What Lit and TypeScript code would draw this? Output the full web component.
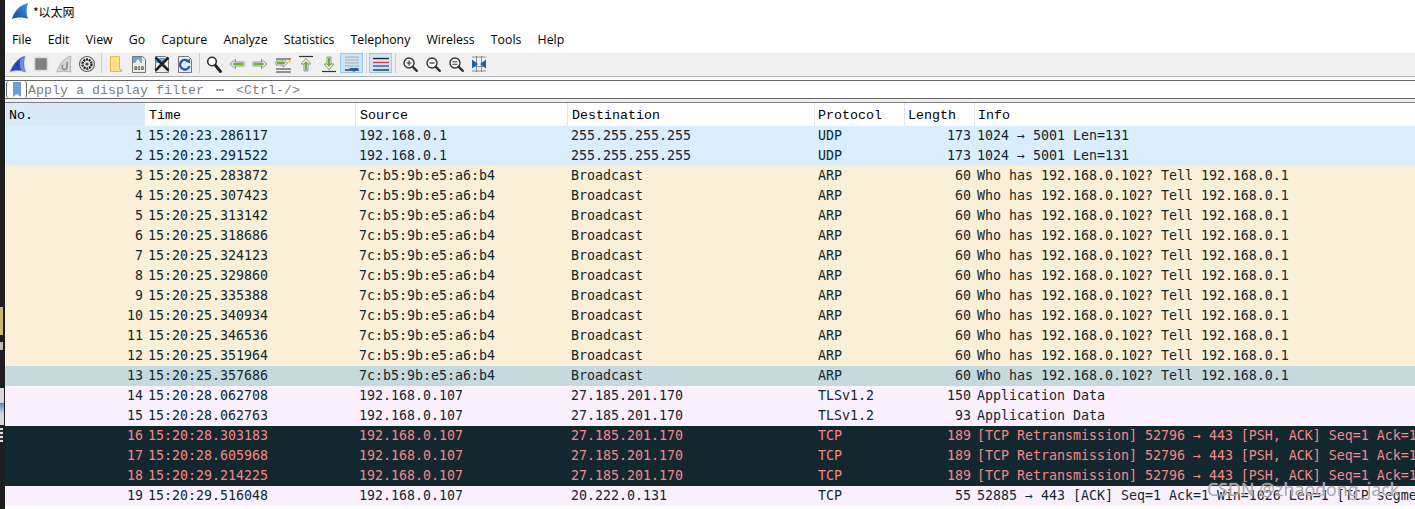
import { LitElement, html, css, svg } from "lit";
import { customElement } from "lit/decorators.js";

type Row = [string, string, string, string, string, string, string, string];
const rows: Row[] = [];
const ip1 = "192.168.0.1", ip107 = "192.168.0.107", mac = "7c:b5:9b:e5:a6:b4", dst = "27.185.201.170";
const arp = "Who has 192.168.0.102? Tell 192.168.0.1";
const retr = "[TCP Retransmission] 52796 → 443 [PSH, ACK] Seq=1 Ack=1 Win=1026 Len=135";
const add = (c: string, t: string, s: string, d: string, p: string, l: string, i: string) =>
  rows.push([String(rows.length + 1), t, s, d, p, l, i, c] as Row);
add("udp", "15:20:23.286117", ip1, "255.255.255.255", "UDP", "173", "1024 → 5001 Len=131");
add("udp", "15:20:23.291522", ip1, "255.255.255.255", "UDP", "173", "1024 → 5001 Len=131");
["283872", "307423", "313142", "318686", "324123", "329860", "335388", "340934", "346536", "351964"].forEach((t) =>
  add("arp", "15:20:25." + t, mac, "Broadcast", "ARP", "60", arp));
add("sel", "15:20:25.357686", mac, "Broadcast", "ARP", "60", arp);
add("tls", "15:20:28.062708", ip107, dst, "TLSv1.2", "150", "Application Data");
add("tls", "15:20:28.062763", ip107, dst, "TLSv1.2", "93", "Application Data");
add("bad", "15:20:28.303183", ip107, dst, "TCP", "189", retr);
add("bad", "15:20:28.605968", ip107, dst, "TCP", "189", retr);
add("bad", "15:20:29.214225", ip107, dst, "TCP", "189", retr);
add("tls", "15:20:29.516048", ip107, "20.222.0.131", "TCP", "55", "52885 → 443 [ACK] Seq=1 Ack=1 Win=1026 Len=1 [TCP segment of a reassembled PDU]");

const menus = ["File", "Edit", "View", "Go", "Capture", "Analyze", "Statistics", "Telephony", "Wireless", "Tools", "Help"];
const cols = ["No.", "Time", "Source", "Destination", "Protocol", "Length", "Info"];

const outline = "#8f8f8f";
const mag = (inner: unknown) => svg`<circle cx="8" cy="8" r="5" fill="#fff" stroke="#333" stroke-width="1.4"/><path d="M11.8 11.8l4 4" stroke="#333" stroke-width="2.4" stroke-linecap="round"/>${inner}`;
const page = (inner: unknown) => svg`<path d="M2.5 1.500h10l3 3v13h-13z" fill="#e9eef2" stroke="#777"/>${inner}`;

const icons: Record<string, unknown> = {
  fin: svg`<path d="M1 17C4 9 9 3 16 1c-1.500 5-1.500 11 .5 16-5-2-11-2-15.500 0z" fill="#2743b8" stroke="#9aa0b8" stroke-width=".8"/><path d="M11.500 4c-1 4-1 9 1.500 12l3 1c-2-5-2-11 0-15z" fill="#6f8fe0"/>`,
  stop: svg`<rect x="2.500" y="2.500" width="13" height="13" fill="#808080" stroke="#dcdcdc" stroke-width="1.400"/>`,
  restart: svg`<path d="M2 17C4 9 9 3 16 1c-1 5-1 11 0 16-5-1-10-1-14 0z" fill="#d6d6d6" stroke="#a8a8a8" stroke-width=".8"/><path d="M12 7v5a2.500 2.500 0 1 1-4-2" fill="none" stroke="#8a8a8a" stroke-width="1.600"/>`,
  options: svg`<circle cx="9" cy="9" r="7.500" fill="#eee" stroke="#666" stroke-width="1.200"/><circle cx="9" cy="9" r="4.500" fill="none" stroke="#222" stroke-width="2.400" stroke-dasharray="2 .8"/><circle cx="9" cy="9" r="1.600" fill="#444"/>`,
  open: svg`<path d="M3.500 1.500h9v13h2v2h-11z" fill="#fde08a" stroke="#e4b84e"/>`,
  save: page(svg`<path d="M3 2h9v6h-9z" fill="#6aa6d8"/><path d="M5 8l3-4 3 4z" fill="#fff"/><text x="9" y="15" text-anchor="middle" font-family="Liberation Mono, monospace" font-size="5.500" font-weight="700" fill="#333">010</text>`),
  close: page(svg`<path d="M3 3h9v5h-9z" fill="#6aa6d8"/><path d="M2.500 2.500l13 13M15.500 2.500l-13 13" stroke="#222" stroke-width="2.600"/>`),
  reload: page(svg`<path d="M12.500 6.500a4.800 4.800 0 1 0 1 4.500" fill="none" stroke="#1f5fb0" stroke-width="2.400"/><path d="M9.500 6.500l4.500-3v5z" fill="#1f5fb0"/>`),
  find: svg`<circle cx="7" cy="6.500" r="4.300" fill="#fff" stroke="#333" stroke-width="1.600"/><path d="M10.500 10.500l5 6" stroke="#222" stroke-width="2.800" stroke-linecap="round"/>`,
  back: svg`<path d="M2 9l5.500-4.500V7h8.500v4H7.500v2.500z" fill="#f4f4f4" stroke=${outline}/><path d="M4.500 9l3-2.300V8h7.500v2H7.500v1.300z" fill="#6cb31c"/>`,
  fwd: svg`<path d="M16 9l-5.500-4.500V7H2v4h8.500v2.500z" fill="#f4f4f4" stroke=${outline}/><path d="M13.500 9l-3-2.300V8H3v2h7.500v1.300z" fill="#6cb31c"/>`,
  go: svg`<path d="M2 4h15M2 14h15M2 17h15" stroke="#333" stroke-width="1.200"/><path d="M13.500 8L9 3.800V6H2v4h7v2.200z" fill="#f4f4f4" stroke=${outline}/><path d="M11.500 8L9.300 6V7H3v2h6.300v1z" fill="#6cb31c"/><circle cx="15.500" cy="6.500" r="1.500" fill="#f4d23c"/>`,
  top: svg`<path d="M2 1.500h14" stroke="#333" stroke-width="1.200"/><path d="M9 3.500l5 5.500h-3v7H7V9H4z" fill="#f4f4f4" stroke=${outline}/><path d="M9 6l2.500 3H10v6H8V9H6.500z" fill="#6cb31c"/>`,
  bottom: svg`<path d="M2 16.500h14" stroke="#333" stroke-width="1.200"/><path d="M9 14.500L4 9h3V2h4v7h3z" fill="#f4f4f4" stroke=${outline}/><path d="M9 12L6.500 9H8V3h2v6h1.500z" fill="#6cb31c"/>`,
  auto: svg`<path d="M2 2h14M2 5h14M2 8h14M2 11h14" stroke="#a9a9a9"/><path d="M2 15h14" stroke="#222" stroke-width="1.300"/><path d="M6 13h10l-5 4z" fill="#1e5fae"/>`,
  color: svg`<path d="M1 3.500h16" stroke="#222" stroke-width="1.300"/><path d="M1 7.500h16" stroke="#d8343a" stroke-width="1.300"/><path d="M1 11h16" stroke="#2a50b0" stroke-width="1.300"/><path d="M1 15h16" stroke="#222" stroke-width="1.300"/>`,
  zin: mag(svg`<path d="M5.500 8h5M8 5.500v5" stroke="#333" stroke-width="1.200"/>`),
  zout: mag(svg`<path d="M5.500 8h5" stroke="#333" stroke-width="1.200"/>`),
  z1: mag(svg`<path d="M5.500 6.800h5M5.500 9.200h5" stroke="#333" stroke-width="1.100"/>`),
  resize: svg`<path d="M2 2h14M2 16h14M2 11.500h14M6.500 1v16M11.500 1v16" stroke="#777" stroke-width=".8" fill="none"/><path d="M2 4.500l6 4.500-6 4.500zM16 4.500L10 9l6 4.500z" fill="#1e5fae"/>`,
};

const tools: string[] = ["fin", "stop", "restart", "options", "|", "open", "save", "close", "reload", "|", "find", "back", "fwd", "go", "top", "bottom", "*auto", "|", "*color", "|", "zin", "zout", "z1", "resize"];

@customElement("app-root")
export class AppRoot extends LitElement {
  static styles = css`
    :host { display: flex; width: 1415px; height: 509px; overflow: hidden; background: #fff; position: relative; font-family: "Open Sans", "Noto Sans", sans-serif; }
    .edge { width: 5px; flex: none; background: #1e1e1e; display: flex; flex-direction: column; padding-top: 307px; box-sizing: border-box; }
    .edge i { display: block; width: 3px; }
    .e1 { height: 28px; background: #c9b77c; }
    .e2 { height: 8px; margin-top: 7px; background: #bbb; }
    .e3 { height: 37px; margin-top: 38px; width: 4px !important; background: linear-gradient(#d8d8d8 40%, #4a88c8 40%, #d8d8d8 70%); }
    .e4 { height: 14px; margin-top: 3px; background: repeating-linear-gradient(#ddd 0 2px, #333 2px 4px); }
    .main { flex: 1; min-width: 0; display: flex; flex-direction: column; }
    .title { height: 23px; padding: 0 0 3px 7px; display: flex; align-items: center; gap: 4px; font-family: "Noto Sans CJK SC", sans-serif; font-size: 12px; color: #000; }
    .title svg { display: block; }
    .menu { height: 26px; display: flex; align-items: center; padding-left: 7px; font-size: 12.300px; color: #000; }
    .menu span { margin-right: 16.200px; }
    .toolbar { height: 23px; background: #f0f0f0; border-top: 1px solid #f8f8f8; border-bottom: 1px solid #b4b4b4; display: flex; align-items: flex-start; padding-left: 1px; }
    .tool { width: 23px; height: 20px; display: flex; align-items: flex-end; justify-content: center; flex: none; }
    .tool.on { background: #cce4f7; outline: 1px solid #99c9ef; outline-offset: -1px; }
    .sep { width: 1px; height: 20px; margin: 0 2.500px; background: #d0d0d0; flex: none; }
    .filter { margin-top: 3px; height: 17px; border-top: 1px solid #666; border-bottom: 1px solid #666; display: flex; align-items: stretch; background: #fff; font: 13.330px "Liberation Mono", monospace; color: #808080; }
    .book { width: 19px; border: 1px solid #666; border-top: 0; border-bottom: 0; border-radius: 3px; margin-left: 1px; display: flex; align-items: center; justify-content: center; flex: none; }
    .ph { padding-left: 1px; line-height: 19px; white-space: pre; }
    .dots { display: inline-block; width: 16px; text-align: center; }
    .gap { height: 3px; background: #f0f0f0; border-bottom: 1px solid #808080; }
    .thead, .row { display: grid; grid-template-columns: 140px 211px 212px 247px 90px 70px 1fr; font: 13.330px/20px "DejaVu Sans Mono", monospace; white-space: nowrap; }
    .thead { height: 23px; font-family: "Liberation Mono", monospace; color: #000; line-height: 25px; }
    .thead div { padding-left: 4px; border-right: 1px solid #e5e5e5; }
    .thead div:first-child { background: #d9ebf9; border-right: 0; }
    .thead div:nth-child(n+5) { padding-left: 3px; }
    .thead div:last-child { border-right: 0; }
    .row { height: 20px; color: #12272e; font-size: 13.290px; }
    .row div { padding-left: 3px; overflow: hidden; }
    .row div:last-child { padding-left: 2px; }
    .row .r { text-align: right; padding: 0 2px 0 0; }
    .row .r.len { padding-right: 4px; }
    .udp { background: #daeeff; }
    .arp { background: #faf0d7; }
    .sel { background: #c6d9dc; }
    .tls { background: #fbf0ff; }
    .bad { background: #12272e; color: #f78787; }
    .wm { position: absolute; left: 1207px; top: 479px; font-size: 17.800px; line-height: 20px; color: rgba(130, 130, 130, .7); text-shadow: 0 0 1px #fff; white-space: nowrap; font-family: "Noto Sans", sans-serif; }
  `;

  render() {
    return html`
      <div class="edge"><i class="e1"></i><i class="e2"></i><i class="e3"></i><i class="e4"></i></div>
      <div class="main">
        <div class="title">
          <svg width="17" height="17" viewBox="0 0 17 17"><defs><linearGradient id="t" x1="0" y1="1" x2="1" y2="0"><stop offset="0" stop-color="#0c4f9e"/><stop offset="1" stop-color="#3f95e0"/></linearGradient></defs><path d="M0 16C2 8 8 2 16 0c-2 5-2 11 0 16-5-2-11-2-16 0z" fill="url(#t)"/></svg>
          <span>*以太网</span>
        </div>
        <div class="menu">${menus.map((m) => html`<span>${m}</span>`)}</div>
        <div class="toolbar">
          ${tools.map((t) => t === "|"
            ? html`<div class="sep"></div>`
            : html`<div class="tool ${t[0] === "*" ? "on" : ""}"><svg width="18" height="18" viewBox="0 0 18 18">${icons[t.replace("*", "")]}</svg></div>`)}
        </div>
        <div class="filter">
          <div class="book"><svg width="10" height="15" viewBox="0 0 10 15"><path d="M1 0h8v15l-4-3-4 3z" fill="#6f9fd8"/></svg></div>
          <div class="ph">Apply a display filter <span class="dots">⋯</span> &lt;Ctrl-/&gt;</div>
        </div>
        <div class="gap"></div>
        <div class="thead">${cols.map((c) => html`<div>${c}</div>`)}</div>
        ${rows.map((r) => html`<div class="row ${r[7]}">
          <div class="r">${r[0]}</div><div>${r[1]}</div><div>${r[2]}</div><div>${r[3]}</div><div>${r[4]}</div><div class="r len">${r[5]}</div><div>${r[6]}</div>
        </div>`)}
      </div>
      <div class="wm">CSDN @zhaodong_jack</div>
    `;
  }
}
